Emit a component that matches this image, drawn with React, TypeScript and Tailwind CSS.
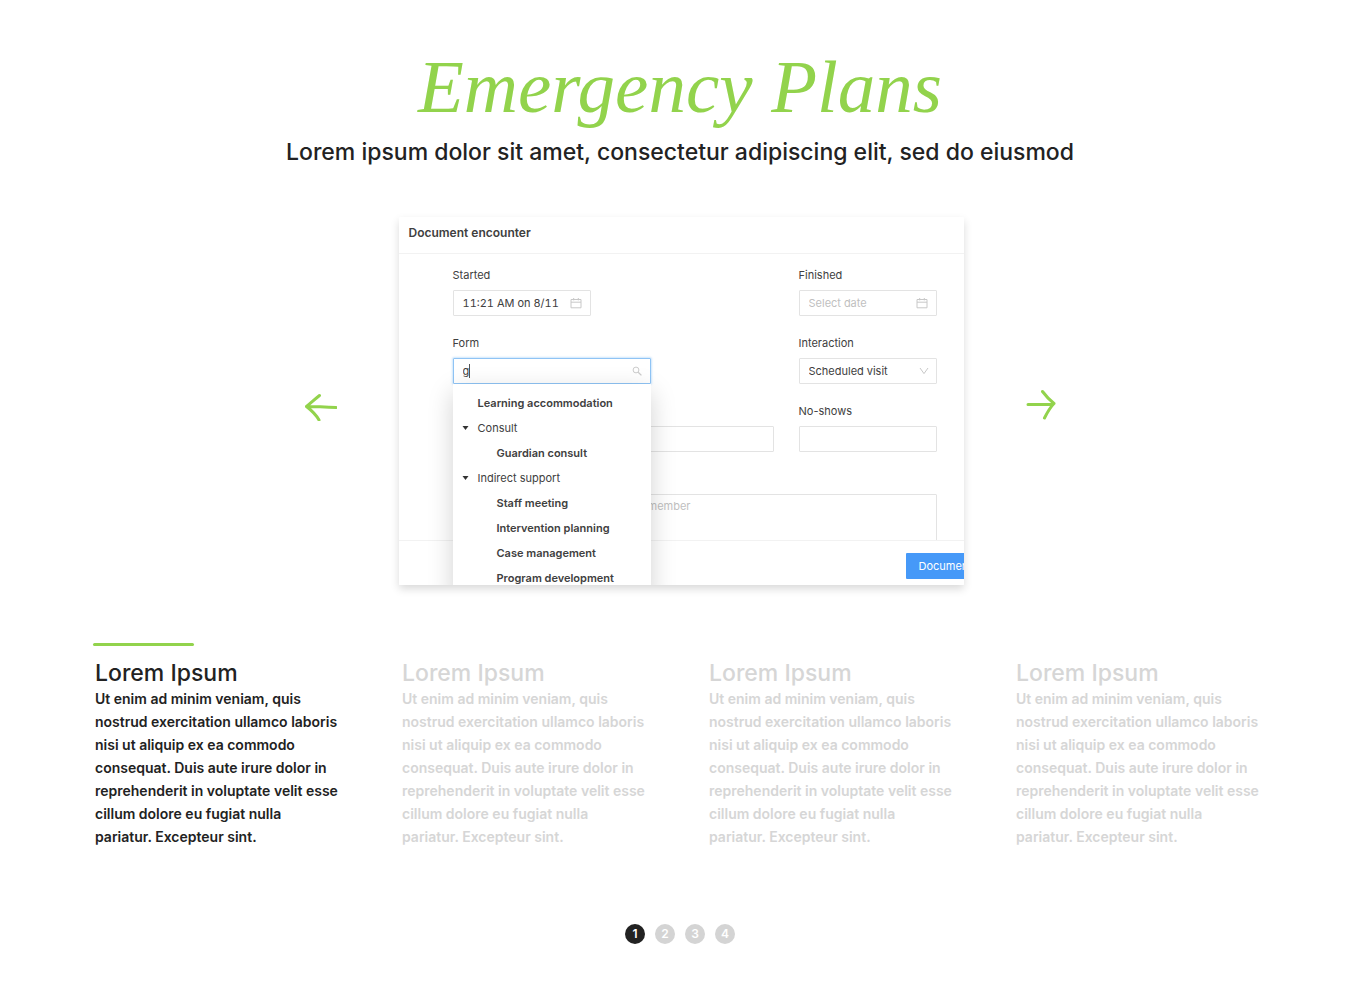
import { useState } from "react";
import type { ReactNode } from "react";

const slides = [1, 2, 3, 4];

const options = [
	{ label: "Learning accommodation", kind: "item" },
	{ label: "Consult", kind: "group" },
	{ label: "Guardian consult", kind: "child" },
	{ label: "Indirect support", kind: "group" },
	{ label: "Staff meeting", kind: "child" },
	{ label: "Intervention planning", kind: "child" },
	{ label: "Case management", kind: "child" },
	{ label: "Program development", kind: "child" },
];

const optionStyles: Record<string, string> = {
	item: "pl-[25px] font-semibold",
	group: "pl-[25px]",
	child: "pl-11 font-semibold",
};

const inputStyle =
	"block h-[26px] w-full rounded-[1px] border border-[#e3e3e3] bg-white px-[9px] text-[11px] text-[#404040] tabular-nums outline-none placeholder:text-[#bfbfbf]";

function CalendarIcon() {
	return (
		<svg
			className="pointer-events-none absolute top-[7px] right-[9px] h-3 w-3"
			viewBox="0 0 12 12"
			fill="none"
			stroke="#c8c8c8"
			aria-hidden="true"
		>
			<path d="M1 2.500h10v8.300H1zM1 5.200h10M3.700 1v2.400M8.300 1v2.400" />
		</svg>
	);
}

function Field({
	id,
	label,
	children,
}: {
	id: string;
	label: string;
	children: ReactNode;
}) {
	return (
		<div>
			<label htmlFor={id} className="block h-6 text-[11px] leading-[18px]">
				{label}
			</label>
			<div className="relative">{children}</div>
		</div>
	);
}

function FormPicker() {
	return (
		<div className="relative w-[198px]">
			<label htmlFor="form" className="block h-6 text-[11px] leading-[18px]">
				Form
			</label>
			<div className="relative">
				<input
					id="form"
					defaultValue="g"
					className="block h-[26px] w-full rounded-[1px] border border-[#8fc4f5] bg-white px-[9px] text-[11px] text-[#404040] shadow-[0_0_2px_1px_#cfe6fb] outline-none"
				/>
				<span className="absolute top-1.5 left-4 h-3.5 w-px bg-[#555]" />
				<svg
					className="absolute top-2 right-[9px] h-2.5 w-2.5"
					viewBox="0 0 10 10"
					fill="none"
					stroke="#cccccc"
					aria-hidden="true"
				>
					<circle cx="4" cy="4" r="2.9" />
					<path d="M6.200 6.200 9.400 9.400" strokeWidth="1.3" />
				</svg>
			</div>
			<ul className="absolute top-full left-0 z-10 w-full bg-white py-[7px] text-[11px] leading-[25px] shadow-[0_8px_24px_rgba(0,0,0,0.18)]">
				{options.map((option) => (
					<li
						key={option.label}
						className={`relative whitespace-nowrap ${optionStyles[option.kind]}`}
					>
						{option.kind === "group" && (
							<svg
								className="absolute top-2.5 left-[9px] h-1 w-[7px]"
								viewBox="0 0 7 4"
								fill="#333333"
								aria-hidden="true"
							>
								<path d="M.5 0h6L3.500 4z" />
							</svg>
						)}
						{option.label}
					</li>
				))}
			</ul>
		</div>
	);
}

function EncounterCard() {
	return (
		<div className="flex h-[368px] w-[565px] flex-col overflow-hidden rounded-[1px] bg-white text-[#404040] shadow-[0_4px_8px_rgba(0,0,0,0.15)]">
			<h2 className="h-[37px] shrink-0 border-b border-[#f2f2f2] px-2.5 text-[12px] leading-[31px] font-semibold">
				Document encounter
			</h2>
			<form className="grid h-[286px] shrink-0 grid-cols-[1fr_138px] content-start gap-x-[25px] gap-y-[18px] pt-3 pr-[27px] pl-[54px]">
				<div className="w-[138px]">
					<Field id="started" label="Started">
						<input
							id="started"
							className={inputStyle}
							defaultValue="11:21 AM on 8/11"
						/>
						<CalendarIcon />
					</Field>
				</div>
				<Field id="finished" label="Finished">
					<input
						id="finished"
						className={inputStyle}
						placeholder="Select date"
					/>
					<CalendarIcon />
				</Field>
				<FormPicker />
				<Field id="interaction" label="Interaction">
					<select id="interaction" className={`${inputStyle} appearance-none`}>
						<option>Scheduled visit</option>
					</select>
					<svg
						className="pointer-events-none absolute top-[9px] right-2 h-2 w-2.5"
						viewBox="0 0 10 8"
						fill="none"
						stroke="#c8c8c8"
						aria-hidden="true"
					>
						<path d="M1 1l4 5.600L9 1" />
					</svg>
				</Field>
				<div className="pt-6">
					<input aria-label="Participants" className={inputStyle} />
				</div>
				<Field id="no-shows" label="No-shows">
					<input id="no-shows" className={inputStyle} />
				</Field>
				<div className="col-span-2 pt-6">
					<textarea
						aria-label="Notes"
						placeholder="member"
						className="block h-16 w-full resize-none rounded-[1px] border border-[#e3e3e3] pt-[3px] pl-[194px] text-[11px] outline-none placeholder:text-[#bfbfbf]"
					/>
				</div>
			</form>
			<div className="flex h-[45px] shrink-0 border-t border-[#f2f2f2] bg-white pt-3 pl-[507px]">
				<button
					type="button"
					className="h-[26px] shrink-0 rounded-[1px] bg-[#4699f8] px-[13px] text-[11px] text-white"
				>
					Document
				</button>
			</div>
		</div>
	);
}

export default function App() {
	const [active, setActive] = useState(1);

	return (
		<main className="bg-white px-6 pt-[42px] pb-11 font-['Inter',sans-serif] text-[#222222]">
			<header className="text-center">
				<h1 className="font-['Liberation_Serif',serif] text-[75px] leading-[90px] text-[#92d34c] italic">
					Emergency Plans
				</h1>
				<p className="text-[23px] leading-10 font-medium">
					Lorem ipsum dolor sit amet, consectetur adipiscing elit, sed do
					eiusmod
				</p>
			</header>

			<section className="mt-[45px] flex items-center justify-center gap-[62px]">
				<button
					type="button"
					aria-label="Previous"
					onClick={() => setActive(active > 1 ? active - 1 : 4)}
				>
					<svg
						className="h-10 w-8"
						viewBox="0 0 32 40"
						fill="none"
						stroke="#92d34c"
						strokeWidth="3"
						strokeLinecap="round"
						strokeLinejoin="round"
					>
						<path d="M14.500 14.500C9.500 18.500 6 22 1.500 25.500 6 29 11 33.500 14 39M2 25.500C10 25 18 26.500 31 26.500" />
					</svg>
				</button>
				<EncounterCard />
				<button
					type="button"
					aria-label="Next"
					onClick={() => setActive(active < 4 ? active + 1 : 1)}
				>
					<svg
						className="h-10 w-[30px]"
						viewBox="0 0 30 40"
						fill="none"
						stroke="#92d34c"
						strokeWidth="3"
						strokeLinecap="round"
						strokeLinejoin="round"
					>
						<path d="M16.500 10.500C19.500 14.500 23.500 19 28 22.500 23.500 27 21 32 18.500 37M2 23.500H25" />
					</svg>
				</button>
			</section>

			<section className="mx-auto mt-[58px] grid max-w-[1170px] grid-cols-4 gap-[58px]">
				{slides.map((n) => (
					<article
						key={n}
						className={n === active ? "text-[#222222]" : "text-[#d6d6d6]"}
					>
						<div
							className={`-ml-0.5 h-[3px] w-[101px] rounded-full ${n === active ? "bg-[#92d34c]" : ""}`}
						/>
						<h3 className="mt-[13px] text-[23px] leading-7 font-medium">
							Lorem Ipsum
						</h3>
						<p className="pr-1 text-[14px] leading-[23px] font-semibold">
							Ut enim ad minim veniam, quis nostrud exercitation ullamco laboris
							nisi ut aliquip ex ea commodo consequat. Duis aute irure dolor in
							reprehenderit in voluptate velit esse cillum dolore eu fugiat
							nulla pariatur. Excepteur sint.
						</p>
					</article>
				))}
			</section>

			<nav className="mt-[76px] flex justify-center gap-2.5">
				{slides.map((n) => (
					<button
						key={n}
						type="button"
						onClick={() => setActive(n)}
						className={`h-5 w-5 rounded-full text-center text-[12px] leading-5 font-semibold text-white ${n === active ? "bg-[#222222]" : "bg-[#d4d4d4]"}`}
					>
						{n}
					</button>
				))}
			</nav>
		</main>
	);
}
